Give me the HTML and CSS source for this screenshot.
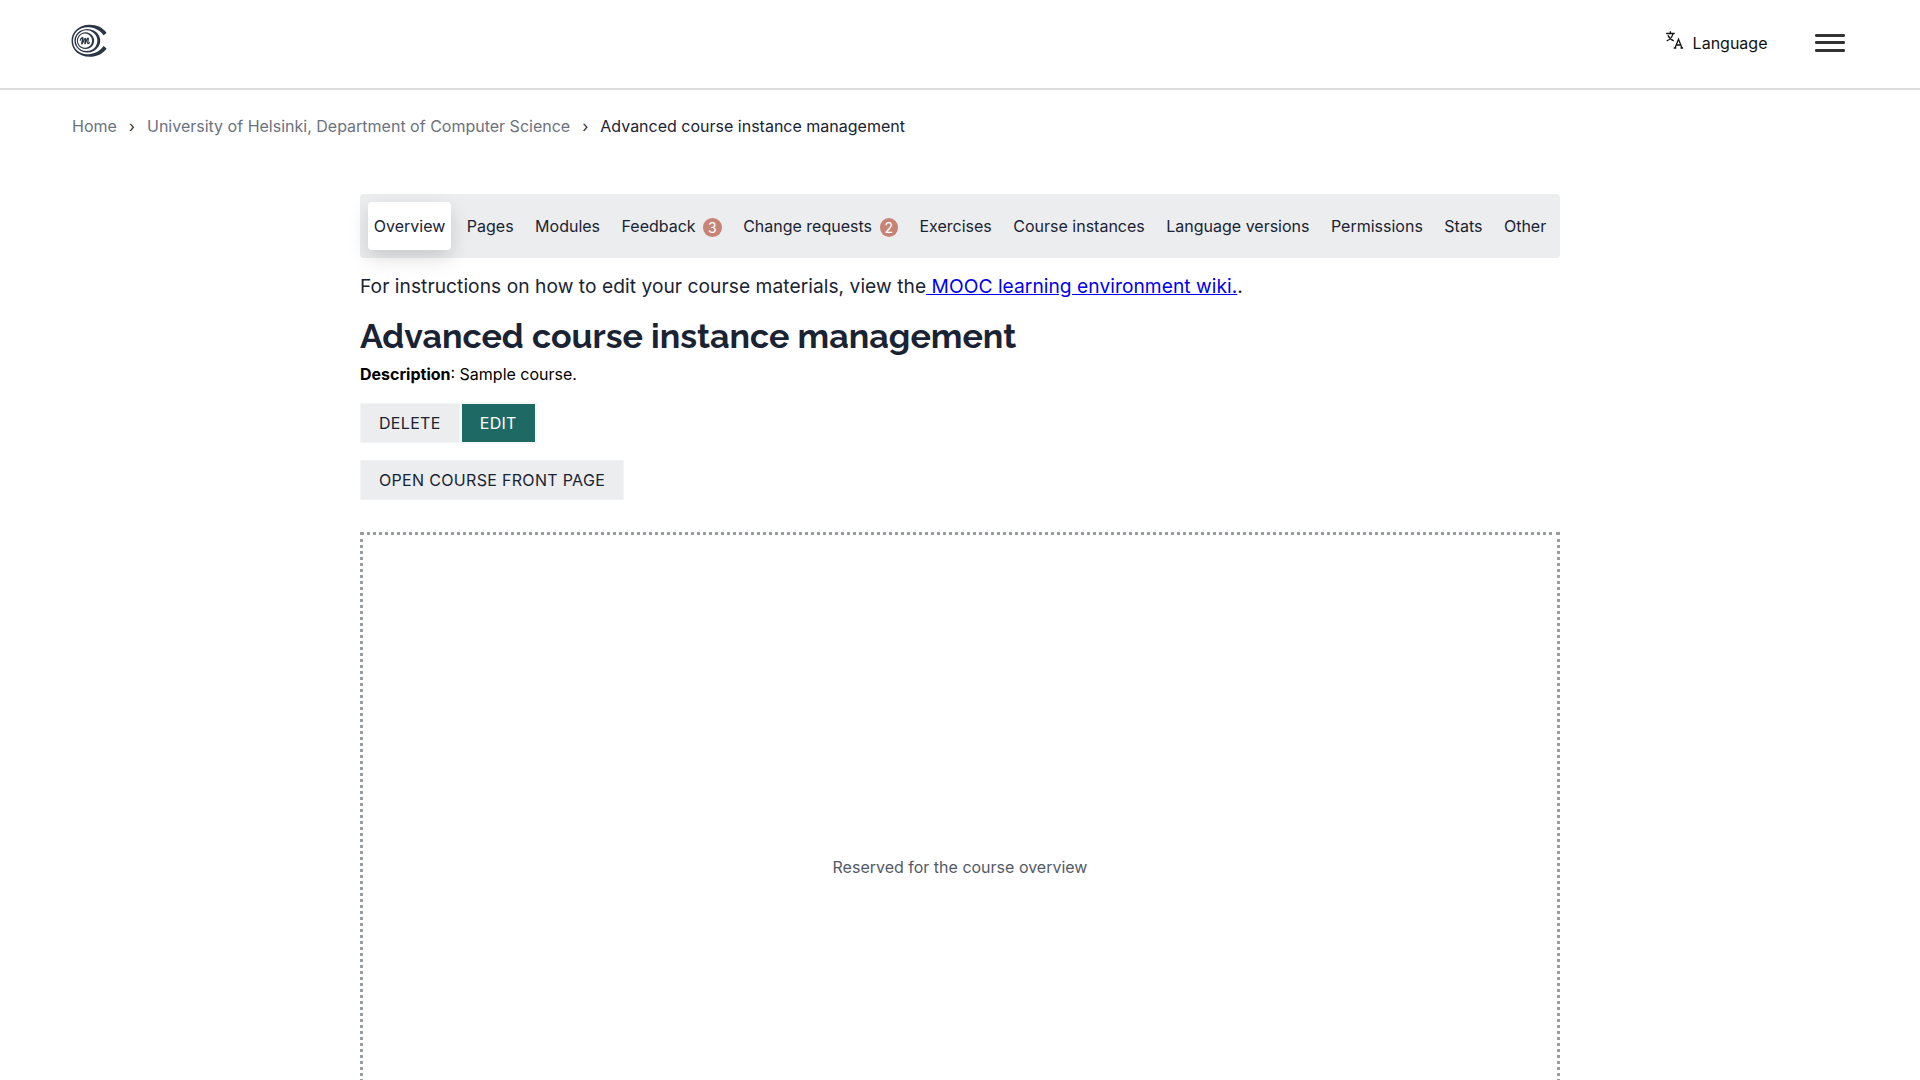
FILE: index.html
```html
<!DOCTYPE html>
<html lang="en">
<head>
<meta charset="utf-8">
<title>Advanced course instance management</title>
<link rel="stylesheet" href="styles.css">
</head>
<body>
<header class="topbar">
  <a class="logo" aria-label="Home">
    <svg width="37" height="34" viewBox="0 0 37 34" fill="#2b3646" fill-rule="evenodd">
      <path d="M35.600 9C32 3.500 26 .7 18.500 .7C8 .7 .5 7.700 .5 16.700S8 32.700 18.500 32.700C26 32.700 32 29.800 35.600 24.400L32.600 22.100C29 27 24.500 29.700 18 30.200C9 30.900 2 25 2 16.700S9 2.500 18 3.200C24.500 3.700 29 6.400 32.600 11.300Z"/>
      <path d="M16.300 4.900a12.900 11.800 0 1 0 .01 0ZM15.600 6.300a10.800 10.400 0 1 1-.01 0Z"/>
      <path d="M14.500 8.300a8.600 8.400 0 1 0 .01 0ZM14 9.600a7.100 7.100 0 1 1-.01 0Z"/>
      <path d="M9.300 16.200c1-2.400 2.400-3.200 2.600-2 .2 1.500-1.900 5-1.200 5.700.7.600 2.600-5.900 3.600-5.600 1 .4-1.100 5-.4 5.400.8.400 2-6 3.200-5.500 1.100.5-1.300 5.200-.1 5.500.6.100 1-.4 1.300-1" fill="none" stroke="#2b3646" stroke-width="1.300" stroke-linecap="round"/>
    </svg>
  </a>
  <div class="actions">
    <button class="language">
      <svg width="18" height="18" viewBox="0 0 18 18" fill="none" stroke="#111" stroke-width="1.300">
        <path d="M.2 2.500H8.700M4.400 .3v2.200M1.900 4.300C3.100 7 5.200 8.900 7.700 9.800M6.900 2.500C6.400 6 3.700 8.700 .7 9.900"/>
        <path d="M9 17l3.500-8.700L16 17M10.200 14h4.800M7.700 17h2.600M14.500 17h2.600"/>
      </svg>
      <span>Language</span>
    </button>
    <button class="menu" aria-label="Menu">
      <svg width="30" height="18" viewBox="0 0 30 18" fill="#333"><rect width="30" height="3" rx="1.200"/><rect y="7" width="30" height="3" rx="1.200"/><rect y="15" width="30" height="3" rx="1.200"/></svg>
    </button>
  </div>
</header>
<nav class="crumbs">
  <a>Home</a><span class="sep">›</span><a>University of Helsinki, Department of Computer Science</a><span class="sep">›</span><span class="current">Advanced course instance management</span>
</nav>
<main class="content">
  <nav class="tabs">
    <a class="tab active">Overview</a>
    <a class="tab">Pages</a>
    <a class="tab">Modules</a>
    <a class="tab">Feedback<span class="count">3</span></a>
    <a class="tab">Change requests<span class="count">2</span></a>
    <a class="tab">Exercises</a>
    <a class="tab">Course instances</a>
    <a class="tab">Language versions</a>
    <a class="tab">Permissions</a>
    <a class="tab">Stats</a>
    <a class="tab">Other</a>
  </nav>
  <p class="intro">For instructions on how to edit your course materials, view the<a href="#"> MOOC learning environment wiki.</a>.</p>
  <h1 class="title">Advanced course instance management</h1>
  <p class="description"><strong>Description</strong>: Sample course.</p>
  <div class="buttons">
    <button class="button">Delete</button><button class="button primary">Edit</button>
  </div>
  <div class="buttons">
    <button class="button">Open course front page</button>
  </div>
  <section class="overview">Reserved for the course overview</section>
</main>
</body>
</html>
```

FILE: styles.css
```css
* { box-sizing: border-box; }
body { margin: 0; height: 1080px; overflow: hidden; background: #fff; color: #1a2333; font: 16px/24px Inter, sans-serif; }
p, h1 { margin: 0; }
button { border: 0; padding: 0; background: none; font: inherit; color: inherit; }
.topbar { display: flex; justify-content: space-between; height: 90px; padding: 0 75px 0 71px; border-bottom: 2px solid #dcdcdc; }
.logo { padding-top: 24px; }
.logo svg { display: block; }
.actions { display: flex; align-items: flex-start; gap: 47.5px; padding-top: 31px; }
.language { display: flex; align-items: flex-start; gap: 9px; color: #111; }
.menu { padding-top: 3px; }
.menu svg { display: block; }
.crumbs { display: flex; padding: 24px 72px 0; color: #6b7280; height: 104px; line-height: 25px; }
.sep { margin: 0 12px; color: #333; }
.current { color: #1a2333; }
.content { width: 1200px; margin: 0 auto; }
.tabs { display: flex; justify-content: space-between; height: 64px; padding: 8px; background: #ebedee; border-radius: 4px; }
.tab { display: flex; align-items: center; padding: 0 5.8px; border-radius: 4px; white-space: nowrap; }
.active { background: #fff; box-shadow: 0 8px 20px rgba(0, 0, 0, .15); }
.count { width: 18.5px; height: 19px; margin: 2px 0 0 7.5px; border-radius: 50%; background: #c78476; color: #fff; font-size: 14px; line-height: 19px; text-align: center; }
.intro { margin-top: 13px; font-size: 19.2px; line-height: 30px; letter-spacing: .045px; }
.intro a { color: #0000ee; }
.title { margin-top: 13px; font: 700 34px/44px Raleway, Lato, sans-serif; }
.description { margin-top: 4px; color: #000; }
.buttons { display: flex; margin-top: 17px; }
.button { height: 40px; padding: 0 18px; border: 1px solid #f3f4f5; background: #ebedee; text-transform: uppercase; letter-spacing: .32px; }
.primary { height: 42px; margin: -1px 0; border: 2px solid #f5f6f7; background: #1f6964; color: #fff; }
.overview { display: flex; align-items: center; justify-content: center; height: 670px; margin-top: 32px; border: 3px dotted #989ca3; color: #535a66; }
```
